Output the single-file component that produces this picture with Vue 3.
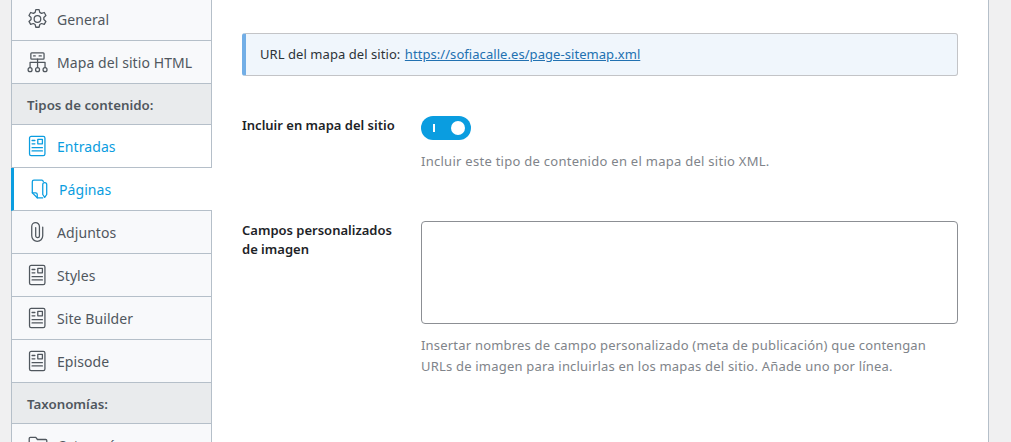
<script setup>
const top = [
  { label: 'General', icon: 'gear' },
  { label: 'Mapa del sitio HTML', icon: 'tree' },
]
const types = [
  { label: 'Entradas', icon: 'doc', tone: 'blue' },
  { label: 'Páginas', icon: 'page', tone: 'active' },
  { label: 'Adjuntos', icon: 'clip' },
  { label: 'Styles', icon: 'doc' },
  { label: 'Site Builder', icon: 'doc' },
  { label: 'Episode', icon: 'doc' },
]
const sections = [
  { items: top },
  { title: 'Tipos de contenido:', items: types },
  { title: 'Taxonomías:', items: [{ label: 'Categorías', icon: 'folder' }] },
]
</script>

<template>
  <div class="page">
    <aside class="side">
      <template v-for="(s, si) in sections" :key="si">
        <div v-if="s.title" class="head">{{ s.title }}</div>
        <div v-for="it in s.items" :key="it.label" class="item" :class="it.tone">
          <svg class="ico" viewBox="0 0 20 20" fill="none" stroke="currentColor" stroke-width="1.15" stroke-linecap="round" stroke-linejoin="round">
            <template v-if="it.icon === 'gear'">
              <circle cx="9.5" cy="10" r="3" />
              <path d="M8 1.500h3l.6 2.500 1.600.9 2.500-.8 1.500 2.700-1.900 1.800v1.800l1.900 1.800-1.500 2.700-2.500-.8-1.600.9-.6 2.500H8l-.6-2.500-1.600-.9-2.500.8-1.500-2.700 1.900-1.800V8.600L1.800 6.800l1.500-2.700 2.500.8 1.600-.9z" />
            </template>
            <template v-else-if="it.icon === 'tree'">
              <rect x="3.500" y="1.800" width="12" height="5.500" rx=".8" />
              <path d="M6 4.500h1.500M11 4.500h2M9.600 7.300V15M2.800 15v-4.700h13.600V15" />
              <circle cx="2.800" cy="17" r="1.800" /><circle cx="9.600" cy="17" r="1.800" /><circle cx="16.400" cy="17" r="1.800" />
            </template>
            <template v-else-if="it.icon === 'doc'">
              <rect x="2.300" y="1.300" width="14" height="17.400" rx="1.500" />
              <path d="M4.600 5h2.600M4.600 8h2.600M4.600 11.500h9.400M4.600 14.500h9.400" />
              <rect x="9.800" y="4" width="4.200" height="4" />
            </template>
            <template v-else-if="it.icon === 'page'">
              <path d="M13 3.300A1.500 1.500 0 0 0 11.800 2H4.500A1.500 1.500 0 0 0 3 3.500v10L7.500 18H12.500" />
              <path d="M3 13.500h3a1.500 1.500 0 0 1 1.500 1.500v3" />
              <path d="M12.500 6a1.800 1.800 0 0 1 3.600 0v9l-1.800 2.600-1.800-2.600z" />
            </template>
            <template v-else-if="it.icon === 'clip'">
              <path d="M14.300 5.500v8a5 5 0 0 1-10 0V5a3.500 3.500 0 0 1 7 0v8.500a1.700 1.700 0 0 1-3.400 0V6" />
            </template>
            <template v-else>
              <path d="M2 17V4a1 1 0 0 1 1-1h5l1.500 2H17a1 1 0 0 1 1 1v11z" />
            </template>
          </svg>
          <span>{{ it.label }}</span>
        </div>
      </template>
    </aside>

    <main class="main">
      <div class="notice">
        URL del mapa del sitio:
        <a href="#">https://sofiacalle.es/page-sitemap.xml</a>
      </div>

      <div class="row first">
        <label class="lab">Incluir en mapa del sitio</label>
        <div class="ctl">
          <div class="toggle"><i class="tick"></i><i class="knob"></i></div>
          <p class="desc toggle-desc">Incluir este tipo de contenido en el mapa del sitio XML.</p>
        </div>
      </div>

      <div class="row second">
        <label class="lab">Campos personalizados de imagen</label>
        <div class="ctl">
          <textarea class="area"></textarea>
          <p class="desc area-desc">Insertar nombres de campo personalizado (meta de publicación) que contengan URLs de imagen para incluirlas en los mapas del sitio. Añade uno por línea.</p>
        </div>
      </div>
    </main>
  </div>
</template>

<style>
html, body { margin: 0; background: #f0f0f1; overflow: hidden; }
</style>

<style scoped>
.page {
  display: flex;
  width: 1011px;
  height: 442px;
  overflow: hidden;
  font-family: "Noto Sans", "Open Sans", sans-serif;
  font-size: 14px;
  color: #50575e;
}
.side {
  width: 199px;
  margin-left: 11px;
  margin-top: -2px;
  flex: none;
  border-left: 1px solid #b5bfc9;
  border-right: 1px solid #b5bfc9;
  background: #f8f9fb;
}
.item {
  display: flex;
  align-items: center;
  gap: 8px;
  height: 42px;
  padding-left: 15px;
  border-bottom: 1px solid #b5bfc9;
  letter-spacing: .08px;
}
.ico { width: 22px; height: 22px; flex: none; }
.head {
  height: 39px;
  padding-top: 1px;
  line-height: 41px;
  padding-left: 15px;
  background: #e9ebed;
  border-bottom: 1px solid #b5bfc9;
  font-weight: 600;
  font-size: 13.3px;
}
.blue { background: #fff; color: #0a9de0; }
.active {
  background: #fff;
  color: #0a9de0;
  margin-left: -1px;
  margin-right: -1px;
  border-left: 3px solid #0a9de0;
  padding-left: 15px;
}
.main {
  width: 777px;
  height: 442px;
  flex: none;
  box-sizing: border-box;
  background: #fff;
  border-right: 1px solid #b5bfc9;
  padding: 33px 30px 0 30px;
}
.notice {
  height: 43px;
  box-sizing: border-box;
  line-height: 41px;
  padding-left: 14px;
  width: 716px;
  background: #f0f6fc;
  border: 1px solid #c3c4c7;
  border-left: 4px solid #72aee6;
  border-radius: 3px;
  font-size: 13px;
  letter-spacing: .06px;
  color: #2c3338;
}
.notice a { color: #2271b1; margin-left: 1px; }
.row { display: flex; }
.first { margin-top: 40px; }
.second { margin-top: 49px; }
.lab {
  width: 179px;
  flex: none;
  font-weight: 600;
  font-size: 13px;
  line-height: 19px;
  color: #1d2327;
  box-sizing: border-box;
  padding-right: 20px;
}
.ctl { width: 537px; }
.toggle {
  position: relative;
  width: 50px;
  height: 24px;
  border-radius: 12px;
  background: #0a9de0;
}
.tick { position: absolute; left: 12px; top: 8px; width: 2px; height: 8px; background: #fff; }
.knob { position: absolute; left: 30px; top: 5px; width: 14px; height: 14px; border-radius: 50%; background: #fff; }
.desc {
  margin: 0;
  font-size: 13px;
  line-height: 21px;
  color: #80848a;
}
.toggle-desc { margin-top: 11px; letter-spacing: .27px; }
.area {
  display: block;
  width: 537px;
  height: 103px;
  box-sizing: border-box;
  border: 1px solid #8c8f94;
  border-radius: 4px;
  background: #fff;
  padding: 0;
  resize: none;
}
.area-desc { margin-top: 11px; letter-spacing: .2px; }
</style>
